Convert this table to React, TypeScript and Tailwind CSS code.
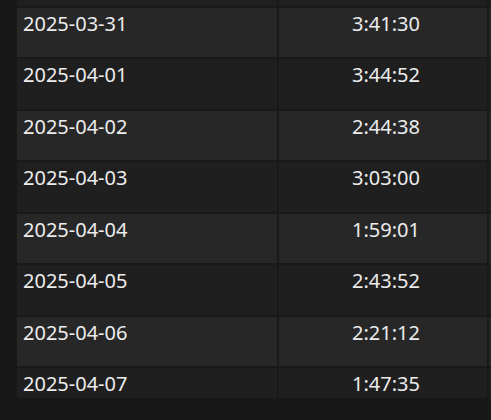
import React from 'react'

// Linhas da tabela (a primeira só aparece como uma faixa no topo)
const linhas = [
  { data: '', tempo: '' },
  { data: '2025-03-31', tempo: '3:41:30' },
  { data: '2025-04-01', tempo: '3:44:52' },
  { data: '2025-04-02', tempo: '2:44:38' },
  { data: '2025-04-03', tempo: '3:03:00' },
  { data: '2025-04-04', tempo: '1:59:01' },
  { data: '2025-04-05', tempo: '2:43:52' },
  { data: '2025-04-06', tempo: '2:21:12' },
  { data: '2025-04-07', tempo: '1:47:35' },
]

export default function App() {
  return (
    <div
      className="w-full h-[420px] bg-[#181818] text-[#ececec]"
      style={{ fontFamily: '"Noto Sans", "Open Sans", sans-serif' }}
    >
      <div className="ml-[17px] h-[398px] overflow-hidden">
        <div className="-mt-[43.43px] grid grid-cols-[260px_208px_1fr] gap-x-[2px] gap-y-[2px] bg-[#191919]">
          {linhas.map((linha, i) => {
            const bg = i % 2 === 0 ? 'bg-[#1f1f1f]' : 'bg-[#272727]'
            return (
              <React.Fragment key={i}>
                <div className={`${bg} h-[49.43px] px-[6px] pt-[1px] text-[20px] leading-[30px]`}>
                  {linha.data}
                </div>
                <div className={`${bg} h-[49.43px] pt-[1px] pl-[6px] text-center text-[20px] leading-[30px]`}>
                  {linha.tempo}
                </div>
                <div className={`${bg} h-[49.43px]`}></div>
              </React.Fragment>
            )
          })}
        </div>
      </div>
    </div>
  )
}
